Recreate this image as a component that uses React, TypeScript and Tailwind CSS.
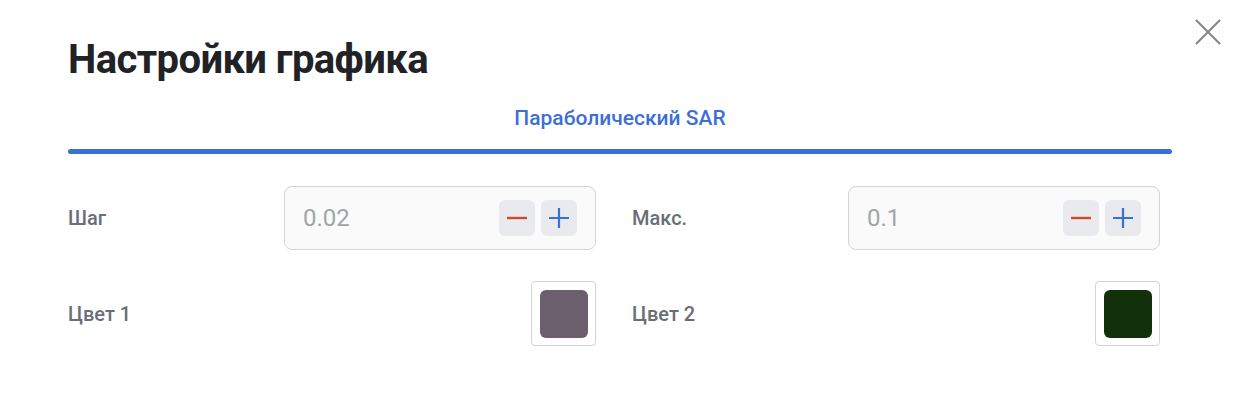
function Stepper({ value }: { value: string }) {
  return (
    <div className="flex h-16 w-[312px] items-center justify-between rounded-lg border border-[#d4d4d8] bg-[#fafafa] pl-[18px] pr-[18px]">
      <span className="text-[24px] text-[#a1a4ab]">{value}</span>
      <div className="flex gap-1.5">
        <button className="flex h-9 w-9 items-center justify-center rounded-md bg-[#e9eaed]">
          <svg width="20" height="20" viewBox="0 0 20 20">
            <path d="M0 10h20" stroke="#d2492a" strokeWidth="2.4" />
          </svg>
        </button>
        <button className="flex h-9 w-9 items-center justify-center rounded-md bg-[#e9eaed]">
          <svg width="20" height="20" viewBox="0 0 20 20">
            <path d="M0 10h20M10 0v20" stroke="#3a6fd4" strokeWidth="2.2" />
          </svg>
        </button>
      </div>
    </div>
  )
}

function Swatch({ color }: { color: string }) {
  return (
    <div className="flex h-[65px] w-[65px] items-center justify-center rounded-sm border border-[#d4d4d8] bg-white">
      <div className="h-12 w-12 rounded-md" style={{ backgroundColor: color }} />
    </div>
  )
}

function Field({ label, children }: { label: string; children: React.ReactNode }) {
  return (
    <div className="flex w-[528px] items-center justify-between">
      <span className="text-[20px] font-medium text-[#6b6e76]">{label}</span>
      {children}
    </div>
  )
}

export default function App() {
  return (
    <div
      className="relative h-[406px] w-[1240px] bg-white"
      style={{ fontFamily: 'Roboto, "Noto Sans", sans-serif' }}
    >
      <button className="absolute left-[1195px] top-[19px]">
        <svg width="26" height="26" viewBox="0 0 26 26">
          <path d="M1 1L25 25M25 1L1 25" stroke="#80848b" strokeWidth="2" />
        </svg>
      </button>

      <div className="px-[68px] pt-[36px]">
        <h1 className="text-[40px] font-bold leading-[48px] tracking-[-0.6px] text-[#202226]">Настройки графика</h1>

        {/* Tabs */}
        <div className="mt-[20px] flex flex-col items-center">
          <span className="text-[21px] font-medium leading-7 text-[#3c6fd6]">Параболический SAR</span>
          <div className="mt-[17px] h-[5px] w-full rounded-full bg-[#3c6fd6]" />
        </div>

        <div className="mt-[32px] flex flex-col gap-[31px]">
          <div className="flex gap-9">
            <Field label="Шаг">
              <Stepper value="0.02" />
            </Field>
            <Field label="Макс.">
              <Stepper value="0.1" />
            </Field>
          </div>
          <div className="flex gap-9">
            <Field label="Цвет 1">
              <Swatch color="#6b5f6d" />
            </Field>
            <Field label="Цвет 2">
              <Swatch color="#12310a" />
            </Field>
          </div>
        </div>
      </div>
    </div>
  )
}
